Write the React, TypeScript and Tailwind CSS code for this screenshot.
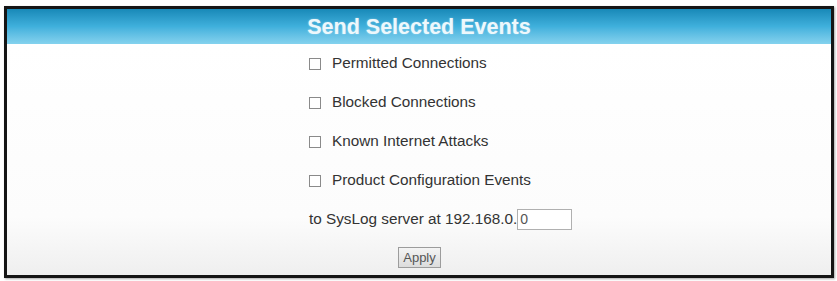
import React from "react";

const events = [
  "Permitted Connections",
  "Blocked Connections",
  "Known Internet Attacks",
  "Product Configuration Events",
];

const EventRow = ({ label }: { label: string }) => (
  <label className="flex h-[39px] shrink-0 items-center gap-[11px]">
    <span className="h-[12px] w-[12px] border border-[#8a8a8a] bg-white" />
    <span>{label}</span>
  </label>
);

export default function App() {
  return (
    <div className="h-[281px] w-[837px] bg-white pl-[4px] pt-[6px] font-['Liberation_Sans',Arial,sans-serif]">
      <div className="flex h-[272px] w-[830px] flex-col overflow-hidden border-[3px] border-[#151515] shadow-[1px_1px_2px_rgba(0,0,0,0.35)]">
        <div className="flex h-[35px] shrink-0 items-center justify-center bg-gradient-to-b from-[#1789b8] via-[#3fb0dc] to-[#84d2ee]">
          <h1 className="pt-[2px] text-[21.5px] font-bold text-[#eef8fc] [text-shadow:0_0_2px_rgba(255,255,255,0.4)]">
            Send Selected Events
          </h1>
        </div>
        <div className="flex flex-1 flex-col bg-[linear-gradient(to_bottom,#ffffff_0%,#fcfcfc_75%,#efefef_100%)] pl-[302px] text-[15.3px] text-[#333]">
          {events.map((e) => (
            <EventRow key={e} label={e} />
          ))}
          <div className="flex h-[39px] shrink-0 items-center">
            <span>to SysLog server at 192.168.0.</span>
            <span className="flex h-[21px] w-[55px] items-center border border-[#b0b0b0] bg-white pl-[2px] text-[14px] text-[#555]">
              0
            </span>
          </div>
          <div className="flex flex-1 items-center pl-[89px]">
            <button className="h-[21px] w-[43px] border border-[#9c9c9c] bg-gradient-to-b from-[#f4f4f4] to-[#dcdcdc] text-[13px] text-[#555]">
              Apply
            </button>
          </div>
        </div>
      </div>
    </div>
  );
}
